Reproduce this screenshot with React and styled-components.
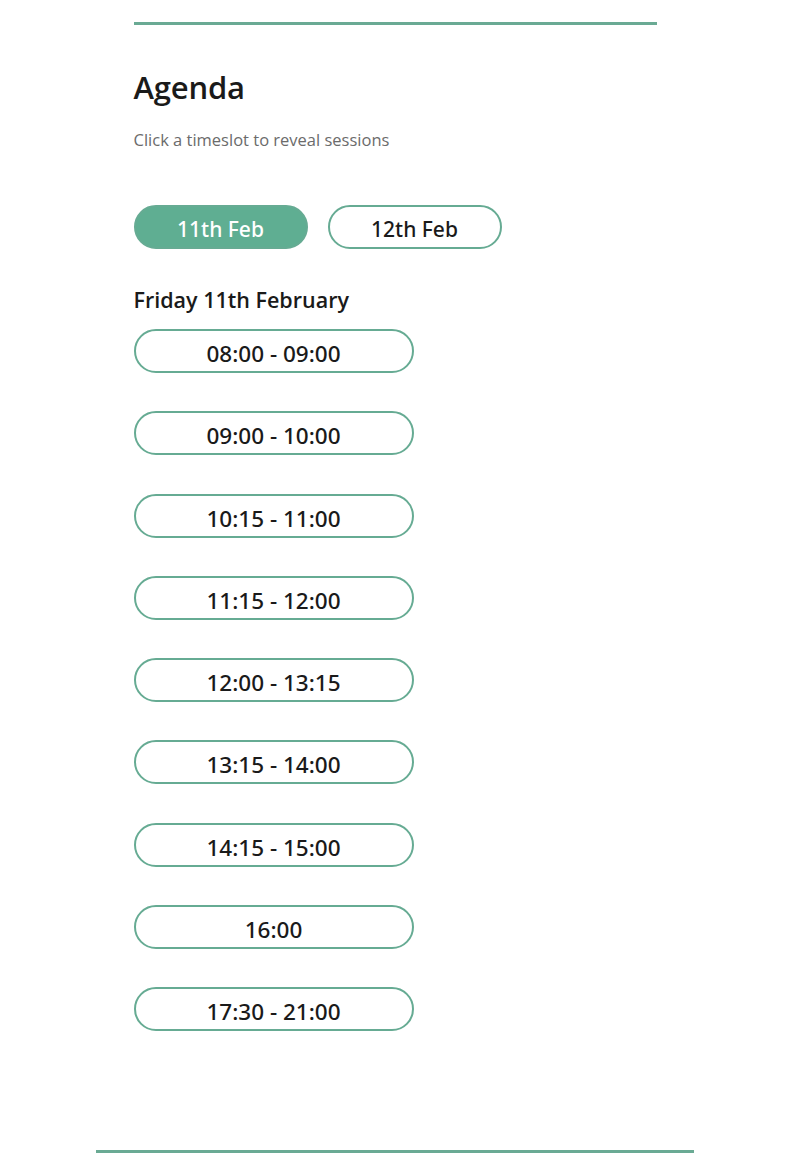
import React, { useState } from "react";
import styled, { createGlobalStyle } from "styled-components";

const Global = createGlobalStyle`
  html, body { margin: 0; padding: 0; background: #fff; }
  body { font-family: "Open Sans", "Noto Sans", sans-serif; color: #1a1a1a; }
`;

const Page = styled.div`
  width: 800px;
  display: flex;
  flex-direction: column;
  align-items: center;
  padding-top: 22px;
  padding-right: 10px;
  box-sizing: border-box;
`;

const Rule = styled.hr`
  margin: 0;
  border: none;
  height: 3px;
  background: #6aaa94;
  width: ${(p) => p.$w}px;
`;

const Section = styled.section`
  width: 523px;
  display: flex;
  flex-direction: column;
  align-items: flex-start;
  padding-top: 42px;
  padding-bottom: 119px;
`;

const Title = styled.h1`
  margin: 0;
  font-size: 31px;
  font-weight: 600;
  line-height: 40px;
  color: #1a1a1a;
  letter-spacing: -0.2px;
`;

const Subtitle = styled.p`
  margin: 22px 0 0;
  font-size: 16.5px;
  line-height: 22px;
  color: #6b6b6b;
`;

const Tabs = styled.div`
  display: flex;
  gap: 20px;
  margin-top: 54px;
`;

const Tab = styled.button`
  width: 174px;
  height: 44px;
  border-radius: 22px;
  border: 2px solid #66ab93;
  background: ${(p) => (p.$active ? "#5fae92" : "#fff")};
  color: ${(p) => (p.$active ? "#fff" : "#1a1a1a")};
  font-family: "Noto Sans", "Open Sans", sans-serif;
  font-size: 21px;
  font-weight: 500;
  cursor: pointer;
  padding: 3px 0 0;
`;

const DayTitle = styled.h2`
  margin: 36px 0 0;
  font-size: 21.5px;
  font-weight: 600;
  line-height: 30px;
`;

const Slots = styled.div`
  display: flex;
  flex-direction: column;
  gap: 38.3px;
  margin-top: 14px;
`;

const Slot = styled.button`
  width: 280px;
  height: 44px;
  border-radius: 22px;
  border: 2px solid #66ab93;
  background: #fff;
  color: #1a1a1a;
  font-family: "Noto Sans", "Open Sans", sans-serif;
  font-size: 22.5px;
  font-weight: 500;
  cursor: pointer;
  padding: 5px 0 0;
`;

const slots = [
  "08:00 - 09:00",
  "09:00 - 10:00",
  "10:15 - 11:00",
  "11:15 - 12:00",
  "12:00 - 13:15",
  "13:15 - 14:00",
  "14:15 - 15:00",
  "16:00",
  "17:30 - 21:00",
];

export default function App() {
  const [day, setDay] = useState(0);
  return (
    <>
      <Global />
      <Page>
        <Rule $w={523} />
        <Section>
          <Title>Agenda</Title>
          <Subtitle>Click a timeslot to reveal sessions</Subtitle>
          <Tabs>
            <Tab $active={day === 0} onClick={() => setDay(0)}>11th Feb</Tab>
            <Tab $active={day === 1} onClick={() => setDay(1)}>12th Feb</Tab>
          </Tabs>
          <DayTitle>Friday 11th February</DayTitle>
          <Slots>
            {slots.map((s) => (
              <Slot key={s}>{s}</Slot>
            ))}
          </Slots>
        </Section>
        <Rule $w={598} />
      </Page>
    </>
  );
}
